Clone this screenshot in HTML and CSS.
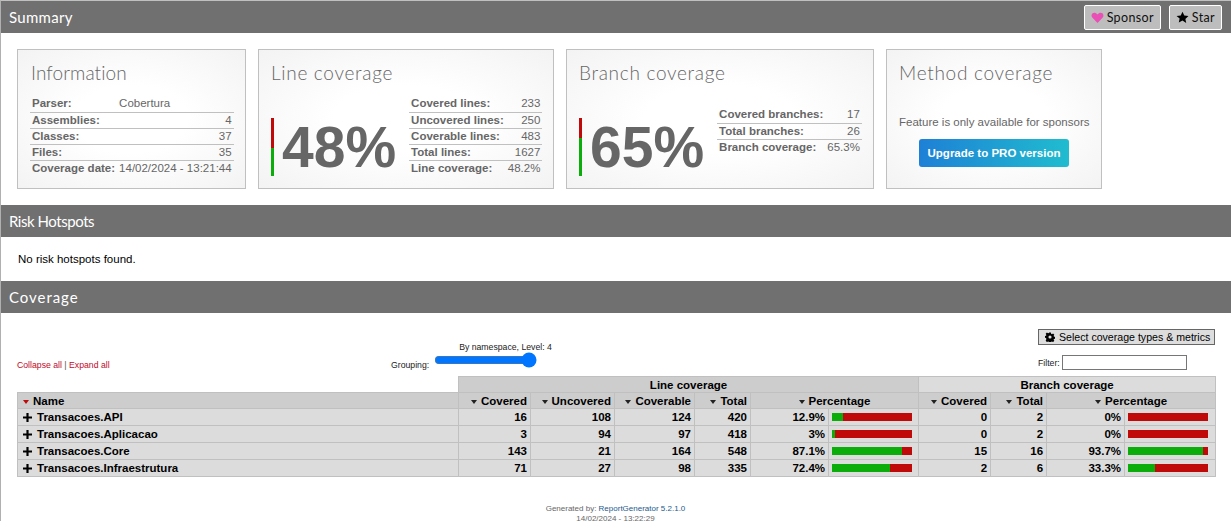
FILE: index.html
```html
<!DOCTYPE html>
<html lang="en">
<head>
<meta charset="utf-8">
<title>Summary - Coverage Report</title>
<link rel="stylesheet" href="styles.css">
</head>
<body>
<header class="section-bar">
  <h1>Summary</h1>
  <div class="bar-buttons">
    <a class="pill"><svg class="pill-icon" viewBox="0 0 14 14"><path fill="#e94fb5" d="M7 13 1.600 7.400C.2 5.900.3 3.600 1.700 2.500c1.500-1.100 3.700-.7 5.300 1.300C8.600 1.800 10.800 1.400 12.300 2.500c1.400 1.100 1.500 3.400.1 4.900Z"/></svg>Sponsor</a>
    <a class="pill"><svg class="pill-icon" viewBox="0 0 14 14"><path fill="#000" d="m7 .8 1.900 4.100 4.500.5-3.300 3.100.9 4.500L7 10.300 3 12.500l.9-4.500L.6 5.400l4.500-.5Z"/></svg>Star</a>
  </div>
</header>
<section class="cards">
  <div class="card card-info">
    <h2>Information</h2>
    <table class="facts">
      <tr><th>Parser:</th><td class="left">Cobertura</td></tr>
      <tr><th>Assemblies:</th><td>4</td></tr>
      <tr><th>Classes:</th><td>37</td></tr>
      <tr><th>Files:</th><td>35</td></tr>
      <tr><th>Coverage date:</th><td>14/02/2024 - 13:21:44</td></tr>
    </table>
  </div>
  <div class="card card-line">
    <h2>Line coverage</h2>
    <div class="metric">
      <div class="vbar"><span class="vred vred-line"></span><span class="vgreen"></span></div>
      <div class="big">48%</div>
      <table class="facts facts-line">
        <tr><th>Covered lines:</th><td>233</td></tr>
        <tr><th>Uncovered lines:</th><td>250</td></tr>
        <tr><th>Coverable lines:</th><td>483</td></tr>
        <tr><th>Total lines:</th><td>1627</td></tr>
        <tr><th>Line coverage:</th><td>48.2%</td></tr>
      </table>
    </div>
  </div>
  <div class="card card-branch">
    <h2>Branch coverage</h2>
    <div class="metric">
      <div class="vbar"><span class="vred vred-branch"></span><span class="vgreen"></span></div>
      <div class="big">65%</div>
      <table class="facts facts-branch">
        <tr><th>Covered branches:</th><td>17</td></tr>
        <tr><th>Total branches:</th><td>26</td></tr>
        <tr><th>Branch coverage:</th><td>65.3%</td></tr>
      </table>
    </div>
  </div>
  <div class="card card-method">
    <h2>Method coverage</h2>
    <p class="only">Feature is only available for sponsors</p>
    <a class="upgrade">Upgrade to PRO version</a>
  </div>
</section>
<header class="section-bar"><h1 class="title-risk">Risk Hotspots</h1></header>
<p class="hotspots">No risk hotspots found.</p>
<header class="section-bar"><h1 class="title-coverage">Coverage</h1></header>
<section class="toolbar">
  <div class="links"><a>Collapse all</a> <span class="sep">|</span> <a>Expand all</a></div>
  <div class="grouping">
    <span>Grouping:</span>
    <div class="grouping-control">
      <div class="level">By namespace, Level: 4</div>
      <input class="slider" type="range" min="0" max="4" value="4">
    </div>
  </div>
  <div class="tools">
    <button class="select-btn"><svg class="gear" viewBox="0 0 16 16"><path fill="#000" fill-rule="evenodd" d="M6.600.8h2.800l.4 2 1.300.6 1.800-1.100 2 2-1.100 1.700.6 1.400 2 .4v2.800l-2 .4-.6 1.400 1.100 1.700-2 2-1.800-1.100-1.300.6-.4 2H6.600l-.4-2-1.300-.6-1.800 1.100-2-2L2.200 11l-.6-1.400-2-.4V6.400l2-.4.6-1.400L1.100 2.900l2-2 1.800 1.100 1.300-.6ZM8 5.500a2.500 2.500 0 1 0 0 5 2.500 2.500 0 0 0 0-5Z"/></svg>Select coverage types &amp; metrics</button>
    <label class="filter">Filter: <input class="filter-input" type="text"></label>
  </div>
</section>
<table class="coverage">
  <colgroup>
    <col class="c-name"><col class="c-72"><col class="c-84"><col class="c-80"><col class="c-56"><col class="c-78"><col class="c-90"><col class="c-72"><col class="c-56"><col class="c-78"><col class="c-91">
  </colgroup>
  <thead>
    <tr class="group-row">
      <th class="blank"></th>
      <th colspan="6" class="group-line">Line coverage</th>
      <th colspan="4" class="group-branch">Branch coverage</th>
    </tr>
    <tr class="head-row">
      <th class="name"><i class="caret caret-red"></i>Name</th>
      <th><i class="caret"></i>Covered</th>
      <th><i class="caret"></i>Uncovered</th>
      <th><i class="caret"></i>Coverable</th>
      <th><i class="caret"></i>Total</th>
      <th colspan="2" class="pct-head"><i class="caret"></i>Percentage</th>
      <th><i class="caret"></i>Covered</th>
      <th><i class="caret"></i>Total</th>
      <th colspan="2" class="pct-head"><i class="caret"></i>Percentage</th>
    </tr>
  </thead>
  <tbody>
    <tr>
      <th class="name"><svg class="plus" viewBox="0 0 10 10"><path d="M3.800 0h2.400v3.800H10v2.400H6.200V10H3.800V6.200H0V3.800h3.800Z"/></svg>Transacoes.API</th>
      <td>16</td><td>108</td><td>124</td><td>420</td><td>12.9%</td>
      <td class="barcell"><div class="bar"><span class="g" style="width:14%"></span></div></td>
      <td>0</td><td>2</td><td>0%</td>
      <td class="barcell"><div class="bar"></div></td>
    </tr>
    <tr>
      <th class="name"><svg class="plus" viewBox="0 0 10 10"><path d="M3.800 0h2.400v3.800H10v2.400H6.200V10H3.800V6.200H0V3.800h3.800Z"/></svg>Transacoes.Aplicacao</th>
      <td>3</td><td>94</td><td>97</td><td>418</td><td>3%</td>
      <td class="barcell"><div class="bar"><span class="g" style="width:4%"></span></div></td>
      <td>0</td><td>2</td><td>0%</td>
      <td class="barcell"><div class="bar"></div></td>
    </tr>
    <tr>
      <th class="name"><svg class="plus" viewBox="0 0 10 10"><path d="M3.800 0h2.400v3.800H10v2.400H6.200V10H3.800V6.200H0V3.800h3.800Z"/></svg>Transacoes.Core</th>
      <td>143</td><td>21</td><td>164</td><td>548</td><td>87.1%</td>
      <td class="barcell"><div class="bar"><span class="g" style="width:87.5%"></span></div></td>
      <td>15</td><td>16</td><td>93.7%</td>
      <td class="barcell"><div class="bar"><span class="g" style="width:93.7%"></span></div></td>
    </tr>
    <tr>
      <th class="name"><svg class="plus" viewBox="0 0 10 10"><path d="M3.800 0h2.400v3.800H10v2.400H6.200V10H3.800V6.200H0V3.800h3.800Z"/></svg>Transacoes.Infraestrutura</th>
      <td>71</td><td>27</td><td>98</td><td>335</td><td>72.4%</td>
      <td class="barcell"><div class="bar"><span class="g" style="width:72.4%"></span></div></td>
      <td>2</td><td>6</td><td>33.3%</td>
      <td class="barcell"><div class="bar"><span class="g" style="width:33.3%"></span></div></td>
    </tr>
  </tbody>
</table>
<footer class="foot">
  <div>Generated by: <a>ReportGenerator 5.2.1.0</a></div>
  <div>14/02/2024 - 13:22:29</div>
</footer>
</body>
</html>
```
FILE: styles.css
```css
* { box-sizing: border-box; }
html, body { margin: 0; padding: 0; }
body {
  height: 521px;
  overflow: hidden;
  background: #fff;
  border-top: 1px solid #c0c0c0;
  border-left: 1px solid #b0b0b0;
  font: 11.5px/16px "Liberation Sans", Arial, sans-serif;
  color: #000;
}
.section-bar {
  height: 32px;
  background: #707070;
  display: flex;
  align-items: center;
  justify-content: space-between;
  padding: 0 7px 0 8px;
}
.section-bar h1 {
  margin: 0;
  font: 400 15px/32px Lato, sans-serif;
  letter-spacing: .3px;
  color: #fff;
}
.section-bar .title-risk { letter-spacing: -.45px; }
.section-bar .title-coverage { letter-spacing: .95px; }
.bar-buttons { display: flex; gap: 8px; margin-right: 2px; }
.pill {
  display: flex;
  align-items: center;
  height: 25px;
  padding: 0 6px;
  background: #bdbdbd;
  border: 1px solid #fff;
  border-radius: 2px;
  font: 400 12.5px Lato, sans-serif;
  letter-spacing: .35px;
  color: #111;
}
.pill-icon { width: 13px; height: 13px; margin-right: 3px; }
.cards {
  display: flex;
  gap: 12px;
  padding: 16px 0 0 16px;
  height: 172px;
}
.card {
  height: 140px;
  border: 1px solid #c0c0c0;
  background: radial-gradient(ellipse at center, #fff 35%, #f3f3f3 100%);
  padding: 0 12px;
  color: #666;
}
.card h2 {
  margin: 0;
  padding: 12px 0 0;
  height: 46px;
  font: 300 19px/22px Lato, sans-serif;
  letter-spacing: .7px;
  color: #666;
}
.card-info h2 { padding-left: 1px; letter-spacing: .1px; }
.card-info { width: 229px; }
.card-line { width: 296px; }
.card-branch { width: 308px; }
.card-method { width: 216px; }
.facts { border-collapse: collapse; width: 100%; }
.facts th, .facts td {
  padding: 0 2px;
  height: 16px;
  line-height: 15px;
  white-space: nowrap;
  border-bottom: 1px solid #c0c0c0;
}
.facts tr:last-child th, .facts tr:last-child td { border-bottom: 0; }
.facts th { text-align: left; font-weight: 700; }
.facts td { text-align: right; font-weight: 400; }
.facts td.left { text-align: left; }
.metric { display: flex; align-items: flex-start; }
.vbar {
  width: 3px;
  height: 58px;
  margin-top: 22px;
  display: flex;
  flex-direction: column;
  flex: none;
}
.vred { background: #c00a0a; }
.vred-line { height: 30px; }
.vred-branch { height: 20px; }
.vgreen { background: #0aad0a; flex: 1; }
.big {
  font: 700 57px/58px "Liberation Sans", Arial, sans-serif;
  color: #666;
  margin: 22px 0 0 8px;
  flex: none;
}
.facts-line { width: 132px; margin-left: 13px; flex: none; }
.facts-branch { width: 144px; margin: 11px 0 0 13px; flex: none; }
.only { margin: 18px 0 9px; text-align: center; white-space: nowrap; line-height: 16px; }
.upgrade {
  display: block;
  width: 150px;
  height: 28px;
  margin: 0 auto;
  border-radius: 3px;
  background: linear-gradient(90deg, #1e80d6, #20bccf);
  color: #fff;
  font-weight: 700;
  line-height: 28px;
  text-align: center;
}
.hotspots { margin: 0; padding: 14px 0 0 17px; height: 44px; line-height: 16px; }
.toolbar {
  display: grid;
  grid-template-columns: 374px 1fr auto;
  align-items: end;
  height: 63px;
  padding: 16px 16px 5px 16px;
  font-size: 8.7px;
  line-height: 12px;
}
.links a { color: #c00a2a; }
.sep { color: #555; }
.grouping { display: flex; align-items: flex-end; gap: 5px; color: #222; }
.grouping-control { width: 103px; margin-bottom: 3px; }
.level { white-space: nowrap; padding-left: 25px; margin-bottom: -1px; }
.slider {
  display: block;
  width: 103px;
  height: 16px;
  margin: 0;
  accent-color: #0075ff;
}
.tools { display: flex; flex-direction: column; align-items: flex-end; gap: 10px; margin-bottom: 1px; }
.select-btn {
  display: flex;
  align-items: center;
  height: 16px;
  width: 177px;
  padding: 0 5px 0 6px;
  background: #ddd;
  border: 1px solid #666;
  font: 10.6px "Liberation Sans", Arial, sans-serif;
  color: #000;
  white-space: nowrap;
}
.gear { width: 10px; height: 10px; margin-right: 4px; flex: none; }
.filter { display: flex; align-items: center; gap: 2px; width: 177px; color: #222; }
.filter-input {
  width: 125px;
  height: 15px;
  padding: 0;
  border: 1px solid #767676;
  background: #fff;
}
.coverage {
  margin-left: 16px;
  width: 1198px;
  table-layout: fixed;
  border-collapse: collapse;
  font-size: 11.5px;
  line-height: 14px;
}
.c-name { width: 441px; }
.c-72 { width: 72px; }
.c-84 { width: 84px; }
.c-80 { width: 80px; }
.c-56 { width: 56px; }
.c-78 { width: 78px; }
.c-90 { width: 90px; }
.c-91 { width: 91px; }
.coverage th, .coverage td {
  height: 17px;
  padding: 0 3px;
  border: 1px solid #c0c0c0;
  background: #dcdcdc;
  color: #000;
  font-weight: 700;
  text-align: right;
  white-space: nowrap;
  overflow: hidden;
}
.coverage .group-row th { height: 16px; text-align: center; }
.coverage .group-row .blank { background: #fff; border: 0; border-bottom: 1px solid #c0c0c0; }
.coverage .group-row .group-line { background: #cdcdcd; }
.coverage .group-row .group-branch { background: #dcdcdc; }
.coverage .head-row th { height: 16px; background: #cdcdcd; }
.coverage .head-row .pct-head { text-align: center; }
.coverage th.name { text-align: left; padding-left: 5px; }
.coverage .barcell { padding: 0 3px; }
.caret {
  display: inline-block;
  width: 0;
  height: 0;
  margin: 0 4px 1px 0;
  border: 3px solid transparent;
  border-top: 4px solid #222;
  border-bottom: 0;
}
.caret-red { border-top-color: #c00a0a; }
.plus { width: 9px; height: 9px; margin-right: 5px; vertical-align: -1px; }
.bar { display: block; height: 8px; background: #c00a0a; width: 80px; }
.bar .g { display: block; height: 8px; background: #0aad0a; }
.foot {
  margin-top: 27px;
  padding-right: 1px;
  text-align: center;
  font-size: 8px;
  line-height: 10px;
  color: #666;
}
.foot a { color: #1c5a8c; }
```
